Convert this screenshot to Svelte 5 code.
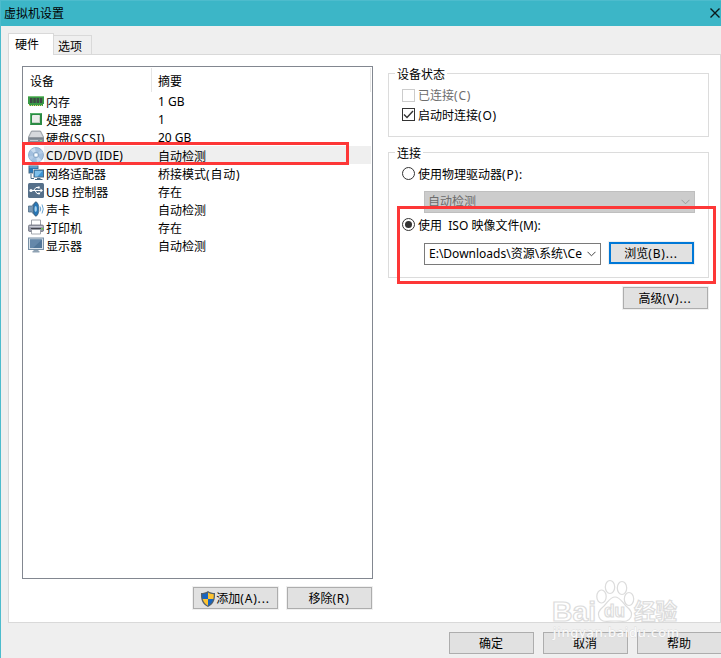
<script>
  const devices = [
    { icon: 'memory', name: '内存', summary: '1 GB' },
    { icon: 'cpu', name: '处理器', summary: '1' },
    { icon: 'disk', name: '硬盘', bus: '(SCSI)', summary: '20 GB' },
    { icon: 'disc', name: 'CD/DVD (IDE)', summary: '自动检测' },
    { icon: 'network', name: '网络适配器', summary: '桥接模式', mode: '(自动)' },
    { icon: 'usb', name: 'USB 控制器', summary: '存在' },
    { icon: 'sound', name: '声卡', summary: '自动检测' },
    { icon: 'printer', name: '打印机', summary: '存在' },
    { icon: 'display', name: '显示器', summary: '自动检测' }
  ];

  let selected = $state('disc');
  let source = $state('iso');
  let connectAtPowerOn = $state(true);

  // chinese labels sit one pixel lower than latin ones
  const isLatin = (text) => /^[\x20-\x7e]+$/.test(text);
</script>

<div class="window">
  <header class="titlebar">
    <span>虚拟机设置</span>
    <svg class="close" viewBox="0 0 10 10" width="10" height="10">
      <path d="M0.5 0.5 L9.5 9.5 M9.5 0.5 L0.5 9.5" stroke="#0a1a1c" stroke-width="1.4" />
    </svg>
  </header>

  <nav class="tabs">
    <div class="tab active">硬件</div>
    <div class="tab">选项</div>
  </nav>

  <main class="panel">
    <section class="left">
      <div class="list">
        <div class="head">
          <span class="name">设备</span>
          <span class="summary">摘要</span>
        </div>
        {#each devices as device}
          <!-- svelte-ignore a11y_click_events_have_key_events, a11y_no_static_element_interactions -->
          <div class="row" class:selected={device.icon === selected} onclick={() => (selected = device.icon)}>
            <svg class="icon" viewBox="0 0 16 16" width="16" height="16">
              {#if device.icon === 'memory'}
                <path d="M0 3h16v8h-1v2H1v-2H0z" fill="#3a9a45" />
                <path d="M0 3h16v1H0z" fill="#79c27a" />
                <path d="M2 5h2.5v5H2zM5.3 5h2.5v5H5.3zM8.6 5h2.5v5H8.6zM11.9 5h2.3v5h-2.3z" fill="#3d4a44" />
                <path d="M1 12.5h14" stroke="#e2d27a" stroke-dasharray="1 1" />
              {:else if device.icon === 'cpu'}
                <rect x="2" y="2" width="12" height="12" rx=".5" fill="#2b8a44" />
                <path d="M2.5 13.5v-11h11" stroke="#55b069" fill="none" />
                <rect x="4" y="4" width="8" height="8" rx="1" fill="#e9ece9" />
                <path d="M5 11.5h6.5v-6" stroke="#c3cec4" fill="none" />
              {:else if device.icon === 'disk'}
                <path d="M3.5 2h9L16 9H0z" fill="#c0c4c9" stroke="#7c858e" stroke-width=".7" />
                <path d="M4 3h8l2.5 5h-13z" fill="#d5d8dc" />
                <rect x=".3" y="9" width="15.4" height="5" rx="1" fill="#87919b" stroke="#5f6972" stroke-width=".6" />
                <path d="M2 11.5h8" stroke="#c7cfd6" />
                <rect x="12" y="11" width="2" height="1" fill="#8ee08b" />
              {:else if device.icon === 'disc'}
                <circle cx="8" cy="8" r="7.5" fill="#a3c0df" stroke="#7f9fc2" stroke-width=".8" />
                <path d="M8 8L2.5 3A7.3 7.3 0 0 1 7 .9zM8 8l5.5 5A7.3 7.3 0 0 1 9 15.1z" fill="#c9dcef" />
                <path d="M8 8L.9 9.5A7 7 0 0 0 3 13zM8 8l7-2a7 7 0 0 0-2-3z" fill="#b4cce6" />
                <circle cx="8" cy="8" r="2.7" fill="#c9dcee" stroke="#7f9fc2" stroke-width=".8" />
                <circle cx="8" cy="8" r="1.3" fill="#fff" />
              {:else if device.icon === 'network'}
                <rect x="1" y="1" width="9" height="7" fill="#2b79b6" stroke="#4a6c86" />
                <path d="M1.5 2h8" stroke="#8bc0e2" fill="none" />
                <path d="M3 9v4.5h3" stroke="#4a6c86" fill="none" />
                <rect x="5" y="4" width="11" height="9" fill="#fff" />
                <rect x="6" y="5" width="9.5" height="7" fill="#3b93d3" stroke="#4a6c86" />
                <path d="M7 6h7.5l-5 5.5H7z" fill="#7fc0ea" />
                <path d="M7 14.5h7.5M9 13.5h3.5" stroke="#4a6c86" />
              {:else if device.icon === 'usb'}
                <rect width="16" height="15" rx="1.5" fill="#56708a" />
                <path d="M3 7.5h10M5.5 7.5L8 4.5h2M7 7.5l2 3h2" stroke="#fff" fill="none" />
                <circle cx="3" cy="7.5" r="1.6" fill="#fff" />
                <path d="M12.5 5.5l2.5 2-2.5 2zM9.7 3.5h2v2h-2z" fill="#fff" />
                <circle cx="11" cy="10.5" r="1.1" fill="#fff" />
              {:else if device.icon === 'sound'}
                <path d="M.5 5h3L8 .8v14.4L3.5 11H.5z" fill="#7898b5" stroke="#4e6c87" stroke-width=".8" />
                <ellipse cx="8" cy="8" rx="2.8" ry="7" fill="#2677b8" stroke="#3f617c" stroke-width=".8" />
                <ellipse cx="7.7" cy="8" rx="1.2" ry="3" fill="#a5d2ef" />
                <path d="M12 5.5q1.5 2.5 0 5M14 3.5q2.5 4.5 0 9" stroke="#6aa4d2" fill="none" />
              {:else if device.icon === 'printer'}
                <path d="M3.5 7V1h9v6" fill="#fff" stroke="#9da1a8" />
                <rect x=".4" y="6" width="15.2" height="6.5" rx="1.5" fill="#9a9dab" stroke="#6f727f" stroke-width=".8" />
                <path d="M1.5 7.5h13" stroke="#c9cbd4" />
                <path d="M3 9.5h10" stroke="#41434c" />
                <path d="M3.5 10.5h9V15h-9z" fill="#fff" stroke="#8d9299" stroke-width=".8" />
                <rect x="13.5" y="9" width="1.5" height="1.5" fill="#5ddc3a" />
              {:else}
                <rect x=".5" y="1" width="15" height="11.5" fill="#d6e0e9" stroke="#7890a5" />
                <rect x="2" y="2.5" width="12" height="8.5" fill="#517699" />
                <path d="M2 2.5h12L5 11H2z" fill="#6588aa" />
                <path d="M5.5 13h5v1h1v1.5h-7V14h1z" fill="#8fa2b3" />
              {/if}
            </svg>
            <span class="name" class:latin={isLatin(device.name)}>{device.name}{#if device.bus}<span class="bus">{device.bus}</span>{/if}</span>
            <span class="summary" class:latin={isLatin(device.summary)}>{device.summary}{#if device.mode}<span class="key">{device.mode}</span>{/if}</span>
          </div>
        {/each}
      </div>
      <div class="actions">
        <button>
          <svg viewBox="0 0 16 16" width="16" height="16">
            <path d="M8 0C6 1.5 3.5 2 1 2c-.3 6.5 1 11 7 14 6-3 7.3-7.5 7-14C12.5 2 10 1.5 8 0z" fill="#55606a" />
            <path d="M8 1.5C6.5 2.6 4.5 3.1 2.2 3.2q0 2.8.5 4.8H8z" fill="#1764c0" />
            <path d="M8 1.5c1.5 1.1 3.5 1.6 5.8 1.7q0 2.8-.5 4.8H8z" fill="#fdc331" />
            <path d="M2.7 8H8v6.7Q4 12.7 2.7 8z" fill="#fdc331" />
            <path d="M13.3 8H8v6.7Q12 12.7 13.3 8z" fill="#1764c0" />
          </svg>
          添加<span class="key">(A)...</span>
        </button>
        <button>移除<span class="key">(R)</span></button>
      </div>
    </section>

    <section class="right">
      <div class="group status">
        <span class="legend">设备状态</span>
        <div class="option disabled"><i class="check"></i>已连接<span class="key">(C)</span></div>
        <!-- svelte-ignore a11y_click_events_have_key_events, a11y_no_static_element_interactions -->
        <div class="option" onclick={() => (connectAtPowerOn = !connectAtPowerOn)}>
          <i class="check">
            {#if connectAtPowerOn}
              <svg viewBox="0 0 11 11" width="11" height="11">
                <path d="M1 5.5l3 3 6-6.5" stroke="#333" stroke-width="1.4" fill="none" />
              </svg>
            {/if}
          </i>
          启动时连接<span class="key">(O)</span>
        </div>
      </div>

      <div class="group connection">
        <span class="legend">连接</span>
        <!-- svelte-ignore a11y_click_events_have_key_events, a11y_no_static_element_interactions -->
        <div class="option" onclick={() => (source = 'drive')}>
          <i class="radio" class:on={source === 'drive'}></i>使用物理驱动器<span class="key">(P):</span>
        </div>
        <div class="combo off">
          <span>自动检测</span>
          <svg viewBox="0 0 9 6" width="9" height="6"><path d="M.5 .8l4 4 4-4" stroke="#9b9b9b" fill="none" /></svg>
        </div>
        <!-- svelte-ignore a11y_click_events_have_key_events, a11y_no_static_element_interactions -->
        <div class="option iso" onclick={() => (source = 'iso')}>
          <i class="radio" class:on={source === 'iso'}></i>使用&nbsp; ISO 映像文件(M):
        </div>
        <div class="file">
          <div class="combo">
            <span>E:\Downloads\资源\系统\Ce</span>
            <svg viewBox="0 0 9 6" width="9" height="6"><path d="M.5 .8l4 4 4-4" stroke="#444" fill="none" /></svg>
          </div>
          <button class="focus">浏览<span class="key">(B)...</span></button>
        </div>
      </div>
      <button class="advanced">高级<span class="key">(V)...</span></button>
    </section>
  </main>

  <footer>
    <button>确定</button>
    <button>取消</button>
    <button>帮助</button>
  </footer>

  <!-- red highlights over the dialog -->
  <div class="mark mark-device"></div>
  <div class="mark mark-iso"></div>

  <svg class="watermark" viewBox="0 0 136 68" width="136" height="68">
    <g fill="#fff" stroke="#d9d9d9" stroke-width="1.2">
      <ellipse cx="52.5" cy="21.5" rx="4.7" ry="6.5" />
      <ellipse cx="61" cy="12" rx="4.7" ry="6.5" />
      <ellipse cx="73" cy="13" rx="4.7" ry="6.5" />
      <ellipse cx="80" cy="24" rx="4.7" ry="6.5" />
      <path d="M66 22c-5 0-7 5-11 9-5 4-7 7-5 11 2 6 8 4 16 4s13 2 16-4c2-4 0-7-5-11-4-4-6-9-11-9z" />
      <text class="brand" x="3" y="46" textLength="44" lengthAdjust="spacingAndGlyphs">Bai</text>
      <text class="du" x="55" y="42" textLength="21" lengthAdjust="spacingAndGlyphs">du</text>
      <text class="cn" x="85" y="44" textLength="43" lengthAdjust="spacingAndGlyphs">经验</text>
    </g>
    <text class="url" x="4" y="62" textLength="126" lengthAdjust="spacing">jingyan.baidu.com</text>
  </svg>
</div>

<style>
  :global(body) {
    margin: 0;
    overflow: hidden;
  }
  .window {
    position: relative;
    box-sizing: border-box;
    width: 721px;
    height: 658px;
    overflow: hidden;
    border-left: 1px solid #4dbccd;
    background: #efefef;
    color: #000;
    font: 12px/18px 'Noto Sans', 'Noto Sans CJK SC', sans-serif;
    white-space: nowrap;
    cursor: default;
  }
  .key {
    letter-spacing: 0.8px;
  }
  .bus {
    letter-spacing: 0.5px;
  }
  .titlebar {
    display: flex;
    align-items: center;
    justify-content: space-between;
    box-sizing: border-box;
    height: 26px;
    padding-left: 3px;
    border-top: 1px solid #4dbccd;
    background: #3cb6c7;
  }
  .close {
    margin: -1px 1px 0 0;
  }

  .tabs {
    display: flex;
    align-items: flex-end;
    height: 28px;
    padding-left: 7px;
  }
  .tab {
    box-sizing: border-box;
    width: 38px;
    height: 19px;
    padding-left: 4px;
    border: 1px solid #d9d9d9;
    border-left: 0;
    border-bottom: 0;
    line-height: 21px;
  }
  .tab.active {
    z-index: 1;
    width: 46px;
    height: 22px;
    margin-bottom: -1px;
    padding-left: 6px;
    border-left: 1px solid #d9d9d9;
    background: #fff;
  }

  .panel {
    display: flex;
    gap: 15px;
    box-sizing: border-box;
    width: 713px;
    height: 569px;
    margin-left: 7px;
    padding: 11px 11px 0 13px;
    border: 1px solid #d9d9d9;
    background: #fff;
  }

  /* device list */
  .list {
    box-sizing: border-box;
    width: 351px;
    height: 513px;
    padding: 1px 1px 0 5px;
    border: 1px solid #828790;
  }
  .head,
  .row {
    display: flex;
  }
  .head {
    box-sizing: border-box;
    height: 24px;
    padding-left: 2px;
    border-right: 1px solid #e5e5e5;
    line-height: 27px;
  }
  .head .name {
    width: 121px;
    border-right: 1px solid #e5e5e5;
  }
  .head .summary {
    padding-left: 6px;
  }
  .row {
    height: 18px;
    line-height: 22px;
  }
  .row .latin {
    line-height: 20px;
  }
  .row .icon {
    flex: none;
    margin-top: 1px;
  }
  .row .name {
    box-sizing: border-box;
    height: 18px;
    width: 114px;
    padding-left: 2px;
  }
  .row .summary {
    flex: 1;
    height: 18px;
  }
  .row.selected .name,
  .row.selected .summary {
    background: #efefef;
  }
  .row.selected .name {
    letter-spacing: 0.15px;
  }

  button {
    display: flex;
    align-items: center;
    justify-content: center;
    flex: none;
    box-sizing: border-box;
    width: 85px;
    height: 22px;
    padding: 1px 1px 0 0;
    border: 1px solid #adadad;
    background: #e1e1e1;
    box-shadow: 0 0 0 1px #f0f0f0;
    color: #000;
    font: inherit;
  }
  button.focus {
    margin-top: -1px;
    border: 2px solid #0078d7;
  }
  .actions {
    display: flex;
    justify-content: flex-end;
    gap: 9px;
    margin-top: 8px;
    padding-right: 1px;
  }

  /* settings of the selected device */
  .right {
    width: 321px;
  }
  .group {
    box-sizing: border-box;
    border: 1px solid #dcdcdc;
    padding-left: 13px;
  }
  .legend {
    display: block;
    width: max-content;
    height: 18px;
    margin: -8px 0 0 -7px;
    padding: 0 2px;
    background: #fff;
  }
  .status {
    height: 64px;
    margin-top: 7px;
  }
  .connection {
    height: 126px;
    margin-top: 15px;
  }
  .option {
    display: flex;
    align-items: center;
    height: 20px;
    padding-top: 1px;
    box-sizing: border-box;
  }
  .option.disabled {
    height: 19px;
    margin-top: 2px;
    color: #6d6d6d;
  }
  .check,
  .radio {
    display: flex;
    flex: none;
    box-sizing: border-box;
    width: 13px;
    height: 13px;
    margin: -2px 3px 0 0;
    border: 1px solid #333;
    background: #fff;
  }
  .disabled .check {
    border-color: #ccc;
  }
  .radio {
    align-items: center;
    justify-content: center;
    border-radius: 50%;
  }
  .radio.on::after {
    width: 7px;
    height: 7px;
    border-radius: 50%;
    background: #333;
    content: '';
  }
  .connection .legend + .option {
    margin-top: 1px;
  }
  .combo {
    display: flex;
    align-items: center;
    justify-content: space-between;
    box-sizing: border-box;
    width: 177px;
    height: 22px;
    padding: 0 4px;
    border: 1px solid #7a7a7a;
    background: #fff;
  }
  .combo.off {
    width: 271px;
    margin: 7px 0 0 22px;
    padding-left: 3px;
    border-color: #bfbfbf;
    background: #ccc;
    color: #6d6d6d;
  }
  .iso {
    margin-top: 2px;
  }
  .file {
    display: flex;
    gap: 8px;
    margin: 8px 0 0 22px;
  }
  .advanced {
    margin: 9px 0 0 235px;
  }

  footer {
    display: flex;
    gap: 9px;
    padding: 9px 0 0 448px;
  }

  .mark {
    position: absolute;
    box-sizing: border-box;
    border: 3px solid #fd3737;
    pointer-events: none;
  }
  .mark-device {
    top: 142px;
    left: 21px;
    width: 327px;
    height: 23px;
  }
  .mark-iso {
    top: 206px;
    left: 396px;
    width: 319px;
    height: 78px;
  }

  .watermark {
    position: absolute;
    top: 575px;
    left: 548px;
    opacity: 0.9;
    pointer-events: none;
  }
  .brand,
  .du {
    font: bold 28px 'Liberation Sans', sans-serif;
  }
  .du {
    font-size: 18px;
  }
  .cn {
    font: bold 22px 'Noto Sans CJK SC', sans-serif;
  }
  .url {
    fill: #fff;
    stroke: #dadada;
    stroke-width: 0.8px;
    paint-order: stroke;
    font: 13px 'Noto Sans', sans-serif;
  }
</style>
